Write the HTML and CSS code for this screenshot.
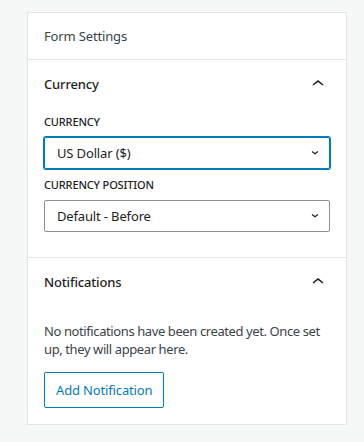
FILE: index.html
```html
<!DOCTYPE html>
<html lang="en">
<head>
  <meta charset="UTF-8" />
  <meta name="viewport" content="width=device-width, initial-scale=1" />
  <title>Form Settings</title>
  <link rel="stylesheet" href="styles.css">
</head>
<body>

<div class="sidebar">
  <div class="sidebar-header">Form Settings</div>

  <section class="panel">
    <div class="panel-title">
      <span>Currency</span>
      <svg class="toggle" width="24" height="24" viewBox="0 0 24 24"><path d="M6.5 12.4L12 8l5.5 4.4-.9 1.2L12 10l-4.6 3.6z"/></svg>
    </div>
    <div class="panel-body">
      <div class="field">
        <label for="currency">Currency</label>
        <div class="select focused" id="currency">
          <span>US Dollar ($)</span>
          <svg width="12" height="12" viewBox="0 0 12 12"><path d="M3 4.5l3 2.2 3-2.2" /></svg>
        </div>
      </div>
      <div class="field">
        <label for="position">Currency Position</label>
        <div class="select" id="position">
          <span>Default - Before</span>
          <svg width="12" height="12" viewBox="0 0 12 12"><path d="M3 4.5l3 2.2 3-2.2" /></svg>
        </div>
      </div>
    </div>
  </section>

  <section class="panel">
    <div class="panel-title">
      <span>Notifications</span>
      <svg class="toggle" width="24" height="24" viewBox="0 0 24 24"><path d="M6.5 12.4L12 8l5.5 4.4-.9 1.2L12 10l-4.6 3.6z"/></svg>
    </div>
    <div class="panel-body notes">
      <p>No notifications have been created yet. Once set up, they will appear here.</p>
      <button type="button">Add Notification</button>
    </div>
  </section>
</div>

</body>
</html>
```

FILE: styles.css
```css
body {
  margin: 0;
  padding: 12px 17px 0 27px;
  background: #f6f7f7;
  font-family: "Noto Sans", "Open Sans", sans-serif;
  font-size: 13px;
  letter-spacing: -0.15px;
  color: #1e1e1e;
}
.sidebar {
  width: 318px;
  background: #fff;
  border: 1px solid #e2e4e7;
}
.sidebar-header {
  height: 46px;
  padding: 0 16px;
  display: flex;
  align-items: center;
  color: #3c434a;
  border-bottom: 1px solid #e2e4e7;
}
.panel + .panel {
  border-top: 1px solid #e2e4e7;
}
.panel-title {
  height: 48px;
  padding: 0 16px;
  display: flex;
  align-items: center;
  justify-content: space-between;
  font-weight: 500;
}
.toggle {
  fill: #1e1e1e;
}
.panel-body {
  padding: 6px 16px 25px;
}
.field + .field {
  margin-top: 8px;
}
label {
  display: block;
  font-size: 11px;
  line-height: 16px;
  font-weight: 500;
  text-transform: uppercase;
  margin-bottom: 7px;
}
.select {
  height: 30px;
  border: 1px solid #8c8f94;
  border-radius: 2px;
  padding: 0 8px 0 12px;
  display: flex;
  align-items: center;
  justify-content: space-between;
  font-size: 13px;
}
.select svg {
  fill: none;
  stroke: #1e1e1e;
  stroke-width: 1.2;
}
.select.focused {
  border-color: #007cba;
  box-shadow: 0 0 0 1px #007cba;
}
/* notifications */
.notes {
  padding-top: 16px;
  padding-bottom: 16px;
}
.notes p {
  margin: 0 0 14px;
  line-height: 18px;
  letter-spacing: -0.4px;
  color: #3c434a;
}
button {
  height: 36px;
  padding: 0 11px;
  background: #fff;
  border: 1px solid #007cba;
  border-radius: 2px;
  color: #007cba;
  font-family: inherit;
  font-size: 13px;
  letter-spacing: inherit;
  cursor: pointer;
}
```
